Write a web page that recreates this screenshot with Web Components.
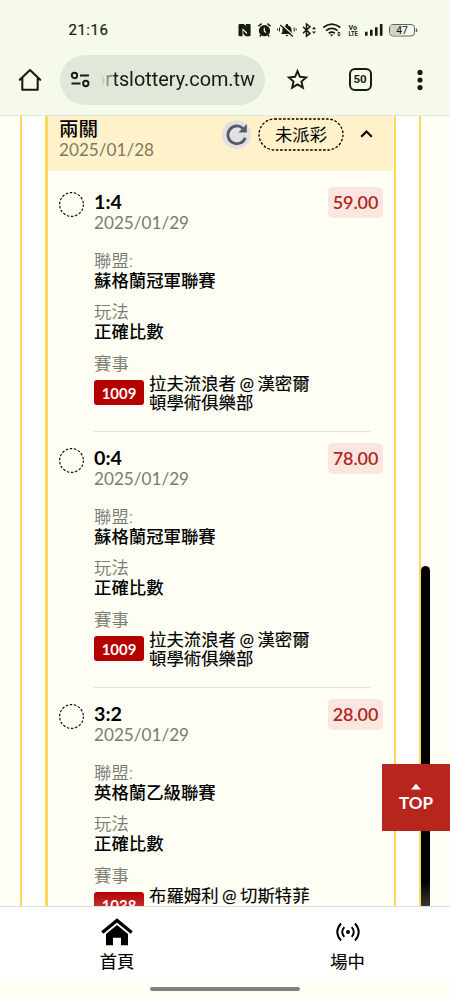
<!DOCTYPE html>
<html lang="zh-Hant">
<head>
<meta charset="utf-8">
<title>投注紀錄</title>
<style>
html,body{margin:0;height:100%;overflow:hidden}
body{font-family:Lato,"Noto Sans CJK TC",sans-serif;color:#000;background:#fffef5}
</style>
</head>
<body>
<lottery-app></lottery-app>
<script>
function define(name, html, setup) {
  const t = document.createElement('template');
  t.innerHTML = html;
  customElements.define(name, class extends HTMLElement {
    connectedCallback() {
      if (this.shadowRoot) return;
      this.attachShadow({mode: 'open'}).append(t.content.cloneNode(true));
      if (setup) setup(this, this.shadowRoot);
    }
  });
}

define('status-bar', `
<style>
:host{display:flex;align-items:center;height:20px;padding:20px 32px 0 68.500px;color:#161c12;font-family:Roboto,sans-serif}
.time{font-size:15px;letter-spacing:.5px;line-height:20px;flex:1;-webkit-text-stroke:.2px}
svg{display:block}
</style>
<span class="time">21:16</span>
<svg width="182" height="20" viewBox="236 20 182 20" fill="none" stroke="#161c12">
  <path d="M239.500 24h4.300l3.200 3v5.500l-4.500-4.300v8h-3q-1-.2-1-1V25q.1-.9 1-1zM245.800 24h3.800q1 .2 1 1v10.200q-.1.900-1 1h-4l-2.400-2.400v-3.300l3.800 3.700V26.500h-1.200z" fill="#161c12" stroke="none"/>
  <circle cx="264.500" cy="30.700" r="5.600" fill="#161c12" stroke="none"/>
  <path d="M258.400 26.300l3.200-2.700M270.600 26.300l-3.200-2.700M260.800 35l-1 1.500M268.200 35l1 1.500" stroke-width="1.500"/>
  <path d="M264.300 27.800v3.200l1.700 1.700" stroke="#f6faeb" stroke-width="1.200"/>
  <path d="M281 34c1.500-1 1.300-3 1.500-5 .3-2 2-3.500 3.500-3.500v-1.500h2v1.500c2 .5 3.500 2 3.500 4 0 2 .3 3.500 1.500 4.500zM285.500 35h3q-1.500 2.500-3 0" fill="#161c12" stroke="none"/>
  <path d="M281.600 24.500l12 11" stroke="#f6faeb" stroke-width="1.500"/><path d="M280.300 25l12.500 11.500" stroke-width="1.300"/>
  <path d="M279.500 27.500v4M277.500 28.700v1.600M294.200 27.500v4M296.200 28.700v1.600" stroke-width="1"/>
  <path d="M303 26.800l7 6.600-3.500 2.700V24l3.500 2.700-7 6.600" stroke-width="1.500"/>
  <path d="M312 29.200l2-2.400 2 2.400zM312 31.400l2 2.400 2-2.400z" fill="#161c12" stroke="none"/>
  <path d="M323.300 27.500q8.500-6.800 17 0M326 30.600q5.800-4.500 11.600 0M328.800 33.300q3-2.200 6 0" stroke-width="1.800"/>
  <path d="M329.800 34.500h3.600l-1.800 2zM337 33.500l1.900-2 1.900 2zM337 34.600l1.900 2 1.900-2z" fill="#161c12" stroke="none"/>
  <g fill="#161c12" stroke="none" font-family="Roboto,sans-serif" font-weight="700"><text x="348.500" y="29.600" font-size="7.800" textLength="8.500" lengthAdjust="spacingAndGlyphs">Vo</text><text x="348.500" y="36.300" font-size="7.800" textLength="9.300" lengthAdjust="spacingAndGlyphs">LTE</text></g>
  <path d="M366.300 35.800v-4M371.300 35.800v-6M376.300 35.800v-8.500M381.200 35.800V24" stroke-width="2.600"/>
  <rect x="389.500" y="24.500" width="25" height="11.500" rx="3.500" fill="#f6faeb" stroke="#606659"/>
  <path d="M392.500 25h9v10.500h-9q-2.500 0-2.500-2.500v-5.500q0-2.500 2.500-2.500" fill="#cfd5c5" stroke="none"/>
  <path d="M416.500 28.500v3.500" stroke-width="1.500" stroke="#606659"/>
  <text x="402" y="34" text-anchor="middle" font-family="Roboto,sans-serif" font-size="10.300" fill="#161c12" stroke="none">47</text>
</svg>`);

define('browser-bar', `
<style>
:host{display:flex;align-items:center;height:51px;margin-top:14px;color:#161c12;padding-right:24px}
svg{display:block;flex:none}
.home{margin:0 18px}
.url{display:flex;align-items:center;box-sizing:border-box;width:205px;height:50px;border-radius:25px;background:#e0e9d9;padding-left:10px;margin-right:21px;font:19.850px/28px Roboto,sans-serif}
.host{width:164px;display:flex;justify-content:flex-end;white-space:nowrap;-webkit-mask-image:linear-gradient(90deg,transparent 10px,#000 25px);mask-image:linear-gradient(90deg,transparent 10px,#000 25px)}
.tabs{box-sizing:border-box;width:23px;height:23px;border:2.200px solid;border-radius:6px;font:700 11.500px/18.500px Roboto,sans-serif;text-align:center;margin:0 46px 0 39.500px}
.more{margin-left:-1px}
</style>
<svg class="home" width="24" height="24" viewBox="0 0 24 24" fill="none" stroke="#161c12" stroke-width="2.100" stroke-linejoin="round" stroke-linecap="round"><path d="M1.800 11.800L12 2l10.200 9.800M4.300 10v11.800h15.400V10"/></svg>
<div class="url">
  <svg width="21" height="20" viewBox="0 0 21 20" fill="none" stroke="#161c12" stroke-width="1.900"><circle cx="4.500" cy="5.500" r="2.700"/><circle cx="15.800" cy="13.500" r="2.700"/><path d="M10 5.500h9M1.500 13.500h9"/></svg>
  <span class="host">ortslottery.com.tw</span>
</div>
<svg class="star" width="23" height="23" viewBox="0 0 24 24" fill="none" stroke="#161c12" stroke-width="2"><path d="M12 3.200l2.500 6 6.500.6-4.900 4.300 1.500 6.400L12 17.100l-5.600 3.400 1.500-6.400L3 9.800l6.500-.6z"/></svg>
<span class="tabs">50</span>
<svg class="more" width="6" height="22" viewBox="0 0 6 22" fill="#161c12"><circle cx="3" cy="3.400" r="2.600"/><circle cx="3" cy="11" r="2.600"/><circle cx="3" cy="18.600" r="2.600"/></svg>`);

define('ticket-header', `
<style>
:host{display:flex;box-sizing:border-box;height:55px;padding:2px 20.500px 0 11px;background:#fff1c9;margin-right:1px}
.name{flex:1}
h2{margin:0;font-size:19.500px;line-height:22px;font-weight:500}
.date{font-size:17.150px;line-height:19px;color:#81795f;display:block}
.refresh{display:flex;align-items:center;justify-content:center;width:29px;height:29px;border-radius:50%;background:#e1e1e3;margin:2px 7px 0 0}
.state{box-sizing:border-box;width:86px;height:33px;margin:0 16px 0 0}
.state text{font:17.300px "Noto Sans CJK TC",sans-serif}
.up{margin-top:10.500px}
svg{display:block}
</style>
<div class="name"><h2><slot name="title"></slot></h2><span class="date"><slot name="date"></slot></span></div>
<div class="refresh"><svg width="23" height="23" viewBox="0 0 23 23"><path d="M20.300 14.700A8.900 8.900 0 1 1 17.800 5.200" fill="none" stroke="#555c63" stroke-width="2.800"/><path d="M21.800 1v8.500h-8.500z" fill="#555c63"/></svg></div>
<svg class="state" viewBox="0 0 86 33"><rect x="1" y="1" width="84" height="31" rx="15.500" fill="none" stroke="#000" stroke-width="1.300" stroke-dasharray="2.600 1.700"/><text x="43" y="22.500" text-anchor="middle">未派彩</text></svg>
<svg class="up" width="13" height="10" viewBox="0 0 13 10"><path d="M1.200 7.700L6.500 2.500l5.300 5.200" fill="none" stroke="#000" stroke-width="2.200"/></svg>`);

define('bet-item', `
<style>
:host{display:block;box-sizing:border-box;height:256px;padding:15px 11px 0 11px}
.head{display:flex;align-items:flex-start;height:60px}
.ring{flex:none;margin:1px 10px 0 0;display:block}
.pick{flex:1}
.score{display:block;font-size:19.700px;line-height:22px;font-weight:700}
.date{display:block;font-size:17.150px;line-height:20px;color:#7b7a74}
.odds{box-sizing:border-box;min-width:55px;height:31px;margin-top:-4px;border-radius:5px;background:#f8e6df;color:#b3251f;font-size:18px;line-height:31px;text-align:center;font-weight:600;letter-spacing:-.1px}
dl{margin:0 0 0 35px;font-size:17.400px;line-height:20px}
dt{color:#7b7a74;font-weight:350}
dd{margin:0 0 11.300px;font-weight:500}
.match{display:flex;align-items:flex-start;font-weight:400;line-height:19px;margin:0;height:57.400px;border-bottom:1px solid #e3e2db;margin-right:13px}
.no{width:50px;height:25px;margin:6px 5px 0 0;border-radius:3px;background:#b50000;color:#fff;font-size:14.900px;line-height:26px;font-weight:700;text-align:center}
.teams{width:165px;font-weight:400;-webkit-text-stroke:.15px;word-spacing:-1px}
:host([fading]) .no{background:linear-gradient(#b50000,#d85c5c 120%)}
</style>
<div class="head">
<svg class="ring" width="25" height="25" viewBox="0 0 25 25"><circle cx="12.500" cy="12.500" r="11.900" fill="none" stroke="#000" stroke-width="1.100" stroke-dasharray="2.500 1.650"/></svg>
<div class="pick"><span class="score"></span><span class="date">2025/01/29</span></div><span class="odds"></span></div>
<dl><dt>聯盟:</dt><dd class="league"></dd><dt>玩法</dt><dd>正確比數</dd><dt>賽事</dt><dd class="match"><span class="no"></span><span class="teams"><slot></slot></span></dd></dl>`,
(el, root) => {
  for (const k of ['score', 'odds', 'league', 'no']) root.querySelector('.' + k).textContent = el.getAttribute(k);
});

define('top-button', `
<style>
:host{display:flex;flex-direction:column;align-items:center;box-sizing:border-box;width:68px;height:67px;padding-top:19px;background:#b7261d;color:#fff;font-size:17px;line-height:22px;font-weight:700}
svg{display:block;margin-bottom:2px}
</style>
<svg width="10" height="7" viewBox="0 0 10 7"><path d="M0 6.500L5 .8l5 5.700z" fill="#fff"/></svg><span>TOP</span>`);

define('bottom-nav', `
<style>
:host{display:flex;box-sizing:border-box;height:75px;background:#fff;border-top:1px solid #dfdfdc;padding:0 0 0 2px}
div{flex:0 0 230px;display:flex;flex-direction:column;align-items:center;padding-top:10px;box-sizing:border-box;font-size:17.300px;line-height:25px}
div+div{flex-basis:231px}
svg{display:block;height:32px}
span{-webkit-text-stroke:.15px}
</style>
<div><svg width="32" height="32" viewBox="0 0 32 32"><path d="M1.300 15.500L16 3.500l14.700 12" fill="none" stroke="#000" stroke-width="3.300"/><path d="M5 17L16 8l11 9v11.300h-7v-7.600h-8v7.600H5z" fill="#000"/></svg><span>首頁</span></div>
<div><svg width="26" height="32" viewBox="0 0 26 32" fill="none" stroke="#000" stroke-width="1.900"><circle cx="13" cy="15" r="2" fill="#000" stroke="none"/><path d="M9.300 10.100q-4.200 4.900 0 9.800M16.700 10.100q4.200 4.900 0 9.800M6 6.500q-7.500 8.500 0 17M20 6.500q7.500 8.500 0 17"/></svg><span>場中</span></div>`);

define('lottery-app', `
<style>
:host{display:flex;flex-direction:column;position:relative;width:450px;height:1000px;overflow:hidden}
.chrome{background:#f6faeb;height:115px;border-bottom:1px solid #e1e5dc;box-sizing:content-box;flex:none}
main{height:790px;flex:none;overflow:hidden;padding:0 29px 0 20px}
.outer{background:#fff;border:solid #fbd75a;border-width:0 2px;padding:0 23px;height:100%;box-sizing:border-box}
.inner{background:#fffef5;border:solid #fbd75a;border-width:0 2px 0 3px;height:100%;box-sizing:border-box}
.items{padding-top:5px}
.scroll{position:absolute;left:421px;top:566px;width:9px;height:340px;border-radius:5px 5px 0 0;background:linear-gradient(#000 316px,#383836)}
top-button{position:absolute;left:382px;top:764px}
.gesture{flex:1;display:flex;justify-content:center;background:#fffef5;padding-top:6px}
.gesture i{width:150px;height:4px;border-radius:2px;background:#81817c}
</style>
<div class="chrome"><status-bar></status-bar><browser-bar></browser-bar></div>
<main><div class="outer"><div class="inner">
<ticket-header><span slot="title">兩關</span><span slot="date">2025/01/28</span></ticket-header>
<div class="items">
<bet-item score="1:4" odds="59.00" league="蘇格蘭冠軍聯賽" no="1009">拉夫流浪者 @ 漢密爾<br>頓學術俱樂部</bet-item>
<bet-item score="0:4" odds="78.00" league="蘇格蘭冠軍聯賽" no="1009">拉夫流浪者 @ 漢密爾<br>頓學術俱樂部</bet-item>
<bet-item fading score="3:2" odds="28.00" league="英格蘭乙級聯賽" no="1038">布羅姆利 @ 切斯特菲</bet-item>
</div></div></div></main>
<bottom-nav></bottom-nav>
<div class="gesture"><i></i></div>
<div class="scroll"></div><top-button></top-button>`);
</script>
</body>
</html>
